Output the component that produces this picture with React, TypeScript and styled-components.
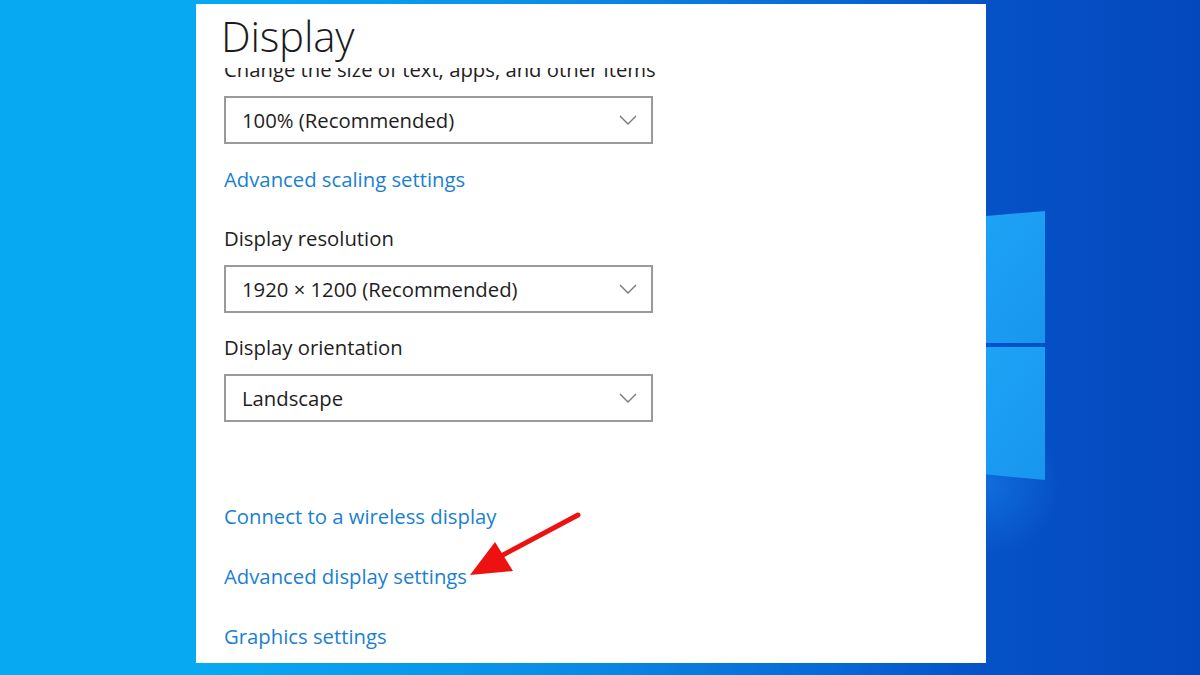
import React from "react";
import styled, { createGlobalStyle } from "styled-components";

const GlobalStyle = createGlobalStyle`
  html, body {
    margin: 0;
    padding: 0;
    width: 1200px;
    height: 675px;
    overflow: hidden;
  }
  * { box-sizing: border-box; }
`;

const Desktop = styled.div`
  position: relative;
  width: 1200px;
  height: 675px;
  overflow: hidden;
  background: linear-gradient(90deg, #07a9f3 0%, #07a9f3 17%, #0a8fe6 45%, #0767d6 70%, #0552c7 82%, #0548bd 100%);
  display: flex;
  align-items: flex-start;
  padding: 4px 0 0 196px;
  font-family: "Open Sans", "Noto Sans", "Liberation Sans", sans-serif;
`;

const Wallpaper = styled.svg`
  position: absolute;
  left: 0;
  top: 0;
  width: 1200px;
  height: 675px;
`;

const Panel = styled.div`
  position: relative;
  width: 790px;
  height: 659px;
  background: #ffffff;
  display: flex;
  flex-direction: column;
  padding-left: 25px;
`;

const Title = styled.h1`
  flex-shrink: 0;
  margin: 0;
  height: 64px;
  padding-top: 7px;
  font-size: 42px;
  font-weight: 300;
  color: #1b1b1b;
  line-height: 50px;
  letter-spacing: -0.2px;
`;

const ScrollArea = styled.div`
  flex: 1;
  min-height: 0;
  overflow: hidden;
  display: flex;
  flex-direction: column;
  padding-left: 3px;
  & > * { flex-shrink: 0; }
`;

const Label = styled.div<{ $top?: number; $gap?: number }>`
  font-size: 20.3px;
  line-height: 26px;
  color: #1e1e1e;
  margin-top: ${(p) => p.$top ?? 0}px;
  margin-bottom: ${(p) => p.$gap ?? 14}px;
`;

const Select = styled.div<{ $gap?: number }>`
  width: 429px;
  height: 48px;
  border: 2px solid #9a9a9a;
  display: flex;
  align-items: center;
  justify-content: space-between;
  padding: 0 14px 0 16px;
  font-size: 20.3px;
  color: #1e1e1e;
  margin-bottom: ${(p) => p.$gap ?? 20}px;
`;

const Chevron = styled.svg`
  width: 18px;
  height: 10px;
`;

const Link = styled.a<{ $gap?: number }>`
  font-size: 20.3px;
  line-height: 26px;
  color: #1a7fd1;
  text-decoration: none;
  align-self: flex-start;
  margin-bottom: ${(p) => p.$gap ?? 0}px;
`;

const Arrow = styled.svg`
  position: absolute;
  left: 0;
  top: 0;
  width: 790px;
  height: 659px;
  pointer-events: none;
`;

const Dropdown = ({ value, gap }: { value: string; gap?: number }) => (
  <Select $gap={gap}>
    <span>{value}</span>
    <Chevron viewBox="0 0 18 10">
      <path d="M1 1 L9 9 L17 1" fill="none" stroke="#7a7a7a" strokeWidth="1.4" />
    </Chevron>
  </Select>
);

export default function App() {
  return (
    <>
      <GlobalStyle />
      <Desktop>
        <Wallpaper viewBox="0 0 1200 675">
          <defs>
            <linearGradient id="tile" x1="0" y1="0" x2="1" y2="1">
              <stop offset="0" stopColor="#1ea6f8" />
              <stop offset="1" stopColor="#1896ee" />
            </linearGradient>
            <radialGradient id="glow" cx="990" cy="485" r="70" gradientUnits="userSpaceOnUse">
              <stop offset="0" stopColor="#1b86f0" stopOpacity="0.5" />
              <stop offset="1" stopColor="#1b86f0" stopOpacity="0" />
            </radialGradient>
          </defs>
          <rect x="900" y="400" width="180" height="180" fill="url(#glow)" />
          <path d="M940 220 L1045 211 L1045 343 L940 343 Z" fill="url(#tile)" />
          <path d="M940 347 L1045 347 L1045 480 L940 470 Z" fill="url(#tile)" />
        </Wallpaper>
        <Panel>
          <Title>Display</Title>
          <ScrollArea>
            <Label $top={-12} $gap={14}>Change the size of text, apps, and other items</Label>
            <Dropdown value="100% (Recommended)" gap={22} />
            <Link href="#" $gap={33}>Advanced scaling settings</Link>
            <Label>Display resolution</Label>
            <Dropdown value="1920 × 1200 (Recommended)" gap={21} />
            <Label>Display orientation</Label>
            <Dropdown value="Landscape" gap={81} />
            <Link href="#" $gap={34}>Connect to a wireless display</Link>
            <Link href="#" $gap={34}>Advanced display settings</Link>
            <Link href="#">Graphics settings</Link>
          </ScrollArea>
          <Arrow viewBox="0 0 790 659">
            <line x1="382" y1="511" x2="290" y2="560" stroke="#ee1111" strokeWidth="5" strokeLinecap="round" />
            <path d="M274 571 L299 538 L317 567 Z" fill="#ee1111" />
          </Arrow>
        </Panel>
      </Desktop>
    </>
  );
}
